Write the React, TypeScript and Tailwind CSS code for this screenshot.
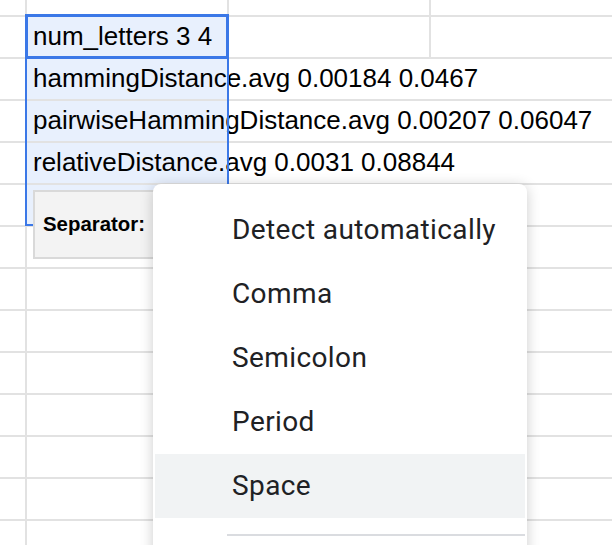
import React from "react";

const rows: { text: string; overflow: boolean }[] = [
  { text: "num_letters 3 4", overflow: false },
  { text: "hammingDistance.avg 0.00184 0.0467", overflow: true },
  { text: "pairwiseHammingDistance.avg 0.00207 0.06047", overflow: true },
  { text: "relativeDistance.avg 0.0031 0.08844", overflow: true },
];

const items = ["Detect automatically", "Comma", "Semicolon", "Period", "Space"];

export default function App() {
  const emptyRows = Array.from({ length: 9 });
  return (
    <div className="relative w-[612px] h-[545px] overflow-hidden bg-white" style={{ fontFamily: '"Liberation Sans", Arial, sans-serif' }}>
      {/* grid */}
      <div className="flex flex-col">
        <div className="flex h-[17px] border-b-2 border-[#e2e2e2]">
          <div className="w-[27px] shrink-0 border-r-2 border-[#e2e2e2]" />
          <div className="w-[202px] shrink-0 border-r-2 border-[#e2e2e2]" />
          <div className="w-[202px] shrink-0 border-r-2 border-[#e2e2e2]" />
          <div className="flex-1" />
        </div>
        {rows.map((r, i) => (
          <div key={i} className="flex h-[42px] border-b-2 border-[#e2e2e2]">
            <div className="w-[27px] shrink-0 border-r-2 border-[#e2e2e2]" />
            <div className="relative w-[202px] shrink-0 bg-[#e8f0fd]">
              <span className="absolute left-[6px] top-[-1px] h-full flex items-center whitespace-nowrap text-[26px] text-black z-10">
                {r.text}
              </span>
            </div>
            <div className={`w-[202px] shrink-0 ${r.overflow ? "" : "border-r-2 border-[#e2e2e2]"}`} />
            <div className="flex-1" />
          </div>
        ))}
        {emptyRows.map((_, i) => (
          <div key={i} className="flex h-[42px] border-b-2 border-[#e2e2e2]">
            <div className="w-[27px] shrink-0 border-r-2 border-[#e2e2e2]" />
            <div className={`w-[202px] shrink-0 ${i === 0 ? "bg-[#e8f0fd]" : "border-r-2 border-[#e2e2e2]"}`} />
            <div className="w-[202px] shrink-0 border-r-2 border-[#e2e2e2]" />
            <div className="flex-1" />
          </div>
        ))}
      </div>

      {/* selection range border */}
      <div className="absolute left-[25px] top-[15px] w-[204px] h-[211px] border-2 border-[#3b78e7] z-20 pointer-events-none" />
      {/* active cell border */}
      <div className="absolute left-[25px] top-[14px] w-[204px] h-[45px] border-[3px] border-[#3b78e7] z-20 pointer-events-none" />

      {/* separator button */}
      <div className="absolute left-[33px] top-[190px] w-[180px] h-[69px] border-2 border-[#d9d9d9] bg-[#f3f3f3] flex items-center pl-[8px] z-30">
        <span className="font-bold text-[20.4px] text-black">Separator:</span>
      </div>

      {/* dropdown menu */}
      <div
        className="absolute left-[153px] top-[184px] w-[374px] h-[380px] bg-white rounded-[8px] shadow-[0_2px_14px_rgba(0,0,0,0.2)] pt-[14px] z-40"
        style={{ fontFamily: 'Roboto, "Noto Sans", sans-serif' }}
      >
        {items.map((it) => (
          <div
            key={it}
            className={`h-[64px] flex items-center pl-[77px] mx-[2px] text-[28px] tracking-[0.4px] text-[#202124] ${it === "Space" ? "bg-[#f1f3f4]" : ""}`}
          >
            {it}
          </div>
        ))}
        <div className="mt-[16px] ml-[74px] mr-[2px] h-[2px] bg-[#dadce0]" />
      </div>
    </div>
  );
}
